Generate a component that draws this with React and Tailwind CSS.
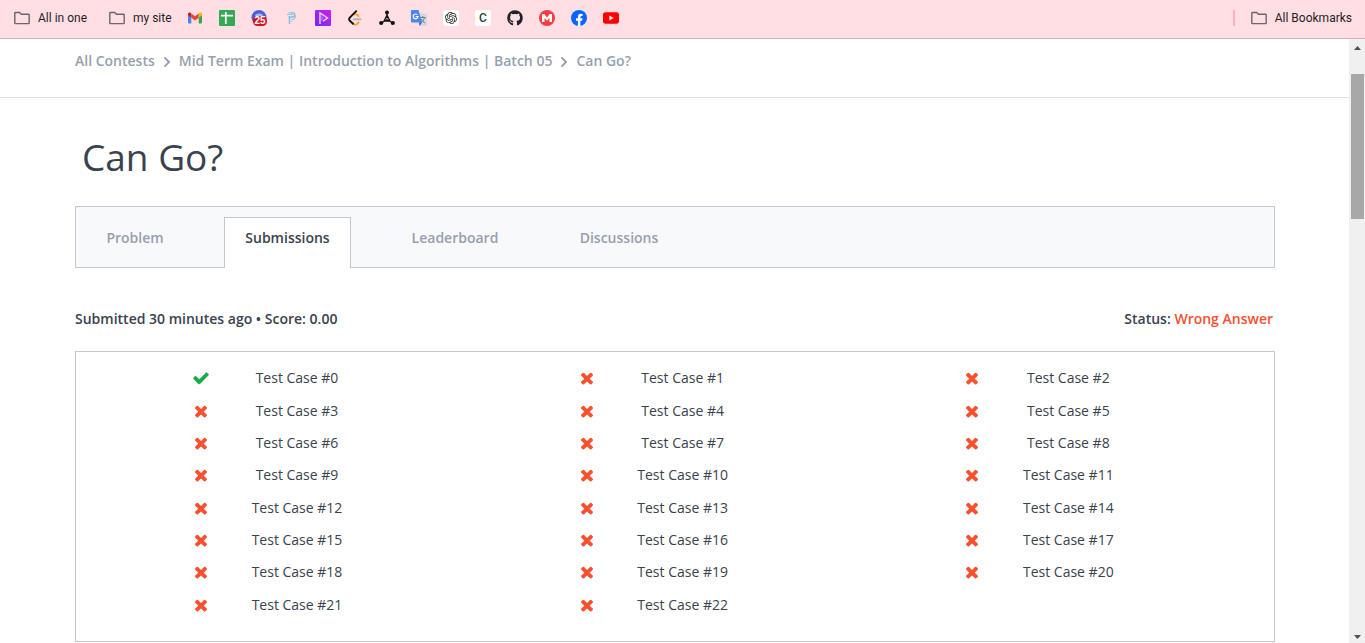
import { FaGithub, FaChevronRight } from "react-icons/fa";
import { SiOpenai } from "react-icons/si";

const CHECK =
  "M1671 566q0 40-28 68l-724 724-136 136q-28 28-68 28t-68-28l-136-136-362-362q-28-28-28-68t28-68l136-136q28-28 68-28t68 28l294 295 656-657q28-28 68-28t68 28l136 136q28 28 28 68z";
const TIMES =
  "M1490 1322q0 40-28 68l-136 136q-28 28-68 28t-68-28l-294-294-294 294q-28 28-68 28t-68-28l-136-136q-28-28-28-68t28-68l294-294-294-294q-28-28-28-68t28-68l136-136q28-28 68-28t68 28l294 294 294-294q28-28 68-28t68 28l136 136q28 28 28 68t-28 68l-294 294 294 294q28 28 28 68z";

function Folder() {
  return (
    <svg viewBox="0 0 16 16" className="size-4" fill="none" stroke="#6b6668" strokeWidth="1.4">
      <path d="M.8 3.2q0-.7.7-.7h4.2l1.7 1.7h7.1q.7 0 .7.7v8q0 .7-.7.7h-13q-.7 0-.7-.7z" />
    </svg>
  );
}

function Gmail() {
  return (
    <svg viewBox="0 0 16 16" className="size-4">
      <path d="M1 4.5v8q0 1 1 1h2.3V7z" fill="#4285f4" />
      <path d="M15 4.5v8q0 1-1 1h-2.3V7z" fill="#34a853" />
      <path d="M11.700 3.600v4.200L15 5.300V4.200c0-1.600-1.700-2.200-2.700-1.200z" fill="#fbbc04" />
      <path d="M4.300 3.600v4.200L1 5.300V4.200c0-1.600 1.700-2.200 2.700-1.200z" fill="#c5221f" />
      <path d="M4.300 7.800V3.400L8 6.200l3.700-2.800v4.400L8 10.600z" fill="#ea4335" />
    </svg>
  );
}

function Sheets() {
  return (
    <svg viewBox="0 0 16 16" className="size-4">
      <rect width="16" height="16" rx="1" fill="#34a853" />
      <path d="M2 5.600h12M6.800 2v12" stroke="#fff" strokeWidth="1.700" />
    </svg>
  );
}

function Counter() {
  return (
    <svg viewBox="0 0 16 16" className="size-4">
      <circle cx="8" cy="7.500" r="7.500" fill="#4a63d8" />
      <path d="M4 6.500q0-3 4-3t4 3z" fill="#a9b7f2" />
      <rect x="2" y="6" width="14" height="10" rx="4.500" fill="#d5121e" />
      <text x="9" y="14.400" textAnchor="middle" fontSize="10" fontWeight="700" fill="#fff" fontFamily="Liberation Sans, sans-serif">25</text>
    </svg>
  );
}

function Phitron() {
  return (
    <svg viewBox="0 0 16 16" className="size-4" fill="none" stroke="#86bfe0" strokeWidth="1.500">
      <path d="M6.500 14V7h3a2 2 0 0 0 0-4.200H7.500" />
      <path d="M4 4.500h5.500M4.800 7h1.700M8.500 9.500h1.500a3 3 0 0 0 2-4.500" strokeWidth="1" />
      <path d="M5.500 2.500h1.500M7.800 11.500h1" strokeWidth="1" />
    </svg>
  );
}

function Player() {
  return (
    <svg viewBox="0 0 16 16" className="size-4">
      <defs>
        <linearGradient id="player" x1="0" y1="1" x2="1" y2="0">
          <stop offset="0" stopColor="#6a2cf5" />
          <stop offset="1" stopColor="#d61cf5" />
        </linearGradient>
      </defs>
      <rect width="16" height="16" rx="1" fill="url(#player)" />
      <path d="M5 14V3l7.500 5L8 11.200" fill="none" stroke="#ead0ff" strokeWidth="1.500" />
      <path d="M5 13V4l4 4z" fill="#b78bff" opacity=".6" />
    </svg>
  );
}

function Leetcode() {
  return (
    <svg viewBox="0 0 16 16" className="size-4" fill="none" strokeWidth="1.900" strokeLinecap="round">
      <path d="M11.500 12.500l-1.600 1.600q-1.500 1.300-3 0L6 13.200M7.300 4.500q1.400-1 2.700 0l1.500 1.500" stroke="#ffa116" />
      <path d="M9.200 1.200L2.800 7.600q-1.400 1.600 0 3.200L6 13.800" stroke="#111" />
      <path d="M7 9.300h6.500" stroke="#b3b3b3" />
    </svg>
  );
}

function Nodes() {
  return (
    <svg viewBox="0 0 16 16" className="size-4">
      <path d="M8 3v5.500M8 5L4.800 11.500M8 5l3.200 6.500M2 13l6-3.200L14 13M4.500 11h7" fill="none" stroke="#111" strokeWidth="1.300" />
      <circle cx="8" cy="2.600" r="2" fill="#111" />
      <circle cx="2.200" cy="13" r="2.100" fill="#111" />
      <circle cx="13.800" cy="13" r="2.100" fill="#111" />
    </svg>
  );
}

function Translate() {
  return (
    <svg viewBox="0 0 16 16" className="size-4">
      <path d="M5 3.500h10q1 0 1 1V15q0 1-1 1H8.500z" fill="#d5d8dc" />
      <path d="M8.800 7.500h6M11.800 6v1.500M13.600 7.500q-1 4-4 5.500M10 9q1.500 3 4 4" fill="none" stroke="#6f8193" strokeWidth="1" />
      <path d="M1 0h6.500L11 12.500H1q-1 0-1-1V1q0-1 1-1z" fill="#4a86ee" />
      <path d="M8 12.500h3L8.500 16z" fill="#2a5fc9" />
      <path d="M6.300 4.700A2.400 2.400 0 1 0 7 6.500H4.600" fill="none" stroke="#fff" strokeWidth="1.200" />
    </svg>
  );
}

function OpenAI() {
  return (
    <span className="flex size-4 items-center justify-center rounded-[3px] bg-white text-[#222]">
      <SiOpenai className="size-3" />
    </span>
  );
}

function LetterC() {
  return (
    <span className="flex size-4 items-center justify-center rounded-[2px] bg-white text-[12px] leading-4 font-medium text-[#333b45]">
      C
    </span>
  );
}

function Mega() {
  return (
    <svg viewBox="0 0 16 16" className="size-4">
      <circle cx="8" cy="8" r="8" fill="#fb3b3f" />
      <path d="M3 12V4h2.300L8 7.400 10.700 4H13v8h-2.500V8L8 10.800 5.500 8v4z" fill="#fff" />
    </svg>
  );
}

function Facebook() {
  return (
    <svg viewBox="0 0 16 16" className="size-4">
      <circle cx="8" cy="8" r="8" fill="#0866ff" />
      <path d="M6.900 16v-5.300H5V8.200h1.900V7q0-3.300 3.200-3.300 1 0 1.500.2v2.200h-1q-1.200 0-1.200 1.200v.9h2.100l-.4 2.500H9.400V16z" fill="#fff" />
    </svg>
  );
}

function Youtube() {
  return (
    <svg viewBox="0 0 16 16" className="size-4">
      <rect y="2.300" width="16" height="11.400" rx="2.600" fill="#f00" />
      <path d="M6.400 5.600v4.800L10.600 8z" fill="#fff" />
    </svg>
  );
}

const Github = () => <FaGithub className="size-4 text-[#1f2328]" />;

const SHORTCUTS = [
  ["Gmail", Gmail],
  ["Sheets", Sheets],
  ["Calendar", Counter],
  ["Phitron", Phitron],
  ["Player", Player],
  ["LeetCode", Leetcode],
  ["Graph", Nodes],
  ["Translate", Translate],
  ["ChatGPT", OpenAI],
  ["Codes", LetterC],
  ["GitHub", Github],
  ["Mega", Mega],
  ["Facebook", Facebook],
  ["YouTube", Youtube],
];

function BookmarksBar() {
  return (
    <nav aria-label="Bookmarks" className="flex h-[39px] items-center border-b border-[#d2b3bb] bg-[#ffdee4] pr-[13px] pb-[2px] pl-[14px] font-['Roboto','Open_Sans',sans-serif] text-[12px] leading-4 text-[#1f1f1f]">
      <button className="flex w-[95px] items-center gap-2">
        <Folder />
        All in one
      </button>
      <button className="flex w-[78px] items-center gap-2">
        <Folder />
        my site
      </button>
      <div className="flex gap-4">
        {SHORTCUTS.map(([name, Icon]) => (
          <a key={name} href="#" aria-label={name}>
            <Icon />
          </a>
        ))}
      </div>
      <div className="ml-auto h-4 w-[2px] bg-[#ffb0bf]" />
      <button className="ml-4 flex items-center gap-2">
        <Folder />
        All Bookmarks
      </button>
    </nav>
  );
}

function Breadcrumbs() {
  return (
    <nav aria-label="Breadcrumb" className="flex h-[59px] items-start gap-2 border-b border-[#e0e1e4] pt-3 pr-[74px] pl-[75px] text-[14px] leading-5 font-semibold text-[#979faf]">
      <a href="#">All Contests</a>
      <FaChevronRight className="mt-[5px] h-3 w-2" />
      <a href="#">Mid Term Exam | Introduction to Algorithms | Batch 05</a>
      <FaChevronRight className="mt-[5px] h-3 w-2" />
      <a href="#">Can Go?</a>
    </nav>
  );
}

function Tabs() {
  return (
    <div role="tablist" className="mt-6 flex h-[62px] items-end border border-[#c2c7d0] bg-[#f8f9fb] text-[14px] leading-5 font-semibold text-[#979faf]">
      <button role="tab" className="h-[50px] w-[118px] pb-2">Problem</button>
      <button role="tab" aria-selected="true" className="-mb-px ml-[30px] h-[51px] w-[127px] border border-b-0 border-[#c2c7d0] bg-white pb-[10px] text-[#39424e]">
        Submissions
      </button>
      <button role="tab" className="ml-[30px] h-[50px] w-[148px] pb-2">Leaderboard</button>
      <button role="tab" className="ml-[20px] h-[50px] w-[140px] pb-2">Discussions</button>
    </div>
  );
}

function TestCase({ index, passed }) {
  return (
    <li className="flex items-center gap-[39px] pl-[96px]">
      <svg viewBox="0 0 1792 1792" role="img" aria-label={passed ? "Passed" : "Failed"} className={passed ? "size-[18px] fill-[#1ba94c]" : "size-[18px] fill-[#f9502f]"}>
        <path d={passed ? CHECK : TIMES} />
      </svg>
      <span className="w-24 text-center whitespace-nowrap">Test Case #{index}</span>
    </li>
  );
}

function Scrollbar() {
  return (
    <div aria-hidden="true" className="flex w-4 shrink-0 flex-col items-center bg-[#f0f0f0]">
      <svg viewBox="0 0 16 16" className="size-4 shrink-0 fill-[#505050]">
        <path d="M5 11h7L8.500 7z" />
      </svg>
      <div className="mt-[19px] h-[145px] w-[13px] bg-[#a8a8a8]" />
      <svg viewBox="0 0 16 16" className="mt-auto size-4 shrink-0 fill-[#505050]">
        <path d="M5 8h7l-3.500 4z" />
      </svg>
    </div>
  );
}

export default function App() {
  return (
    <div className="flex min-h-screen flex-col bg-white font-['Open_Sans','Noto_Sans',sans-serif]">
      <BookmarksBar />
      <div className="flex flex-1">
        <div className="min-w-0 flex-1">
          <Breadcrumbs />
          <main className="pr-[74px] pl-[75px] text-[#39424e]">
            <h1 className="pt-[33px] pl-[7px] text-[37px] leading-[51px] font-medium">Can Go?</h1>
            <Tabs />
            <div className="mt-[41px] flex justify-between pr-[2px] text-[14px] leading-5 font-semibold">
              <p>Submitted 30 minutes ago • Score: 0.00</p>
              <p>
                Status: <span className="text-[#f9502f]">Wrong Answer</span>
              </p>
            </div>
            <ul className="mt-[22px] grid min-h-[291px] auto-rows-fr grid-cols-3 border border-[#c2c7d0] pt-[10px] pr-[21px] pb-5 pl-5 text-[14px] leading-8">
              {Array.from({ length: 23 }, (_, i) => (
                <TestCase key={i} index={i} passed={i === 0} />
              ))}
            </ul>
          </main>
        </div>
        <Scrollbar />
      </div>
    </div>
  );
}
